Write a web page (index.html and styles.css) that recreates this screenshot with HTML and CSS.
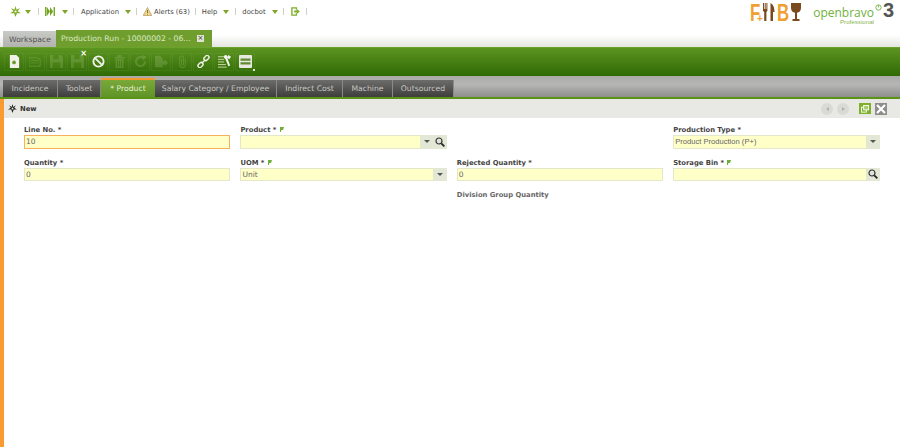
FILE: index.html
```html
<!DOCTYPE html>
<html lang="en">
<head>
<meta charset="utf-8">
<title>Production Run</title>
<link rel="stylesheet" href="styles.css">
</head>
<body>
<header class="topbar">
  <nav class="nav">
    <svg class="ic-star" viewBox="0 0 12 12"><path d="M6 0 7.200 4 11 2.200 8.400 5.600 12 8 7.600 7.800 6 12 4.400 7.800 0 8 3.600 5.600 1 2.200 4.800 4Z" fill="#7fae2a"/><circle cx="6" cy="6" r="1.200" fill="#fff"/></svg>
    <i class="caret c1"></i><i class="sep s1"></i>
    <svg class="ic-ff" viewBox="0 0 11 10"><path d="M0 0h1.500v10H0zM9.500 0H11v10H9.500zM2 0l3.500 5L2 10zM5.500 0 9 5l-3.500 5z" fill="#6fa51f"/></svg>
    <i class="caret c2"></i><i class="sep s2"></i>
    <span class="nv">Application</span><i class="caret c3"></i><i class="sep s3"></i>
    <svg class="ic-warn" viewBox="0 0 9 9"><path d="M4.500.5 8.800 8.500H.2Z" fill="#f0d58a" stroke="#a58a4a" stroke-width=".6"/><path d="M4.200 3h.7v3h-.7zM4.200 6.700h.7v.9h-.7z" fill="#5d4a20"/></svg>
    <span class="nv">Alerts (63)</span><i class="sep s4"></i>
    <span class="nv">Help</span><i class="caret c3"></i><i class="sep s5"></i>
    <span class="nv">docbot</span><i class="caret c3"></i><i class="sep s6"></i>
    <svg class="ic-exit" viewBox="0 0 10 10"><path d="M6 3V1H1v8h5V7" fill="none" stroke="#7fae2a" stroke-width="1.500"/><path d="M3.500 4h3V2.200L9.800 5 6.500 7.800V6h-3z" fill="#7fae2a"/></svg>
    <i class="sep s7"></i>
  </nav>
  <div class="logos">
    <div class="fb">
      <span class="fb-f">F</span><span class="plus">+</span>
      <svg class="cutlery" viewBox="0 0 12 18"><path d="M0 0h1v6h.7V0h1v6h.7V0h1v8L3.400 9v9H1.200V9L0 8zM7.500 0C10 1 11.500 4 11.500 9H10v9H7.500z" fill="#7a4a1e"/></svg>
      <span class="fb-b">B</span>
      <svg class="glass" viewBox="0 0 10 18"><path d="M0 0h10v5c0 3-2 4.500-4 4.800V16h2.500v2h-7v-2H4V9.800C2 9.500 0 8 0 5z" fill="#7a4a1e"/></svg>
    </div>
    <div class="ob">
      <div class="ob-text"><span>openbravo</span><small>Professional</small></div>
      <svg class="ob-power" viewBox="0 0 8 8"><circle cx="4" cy="4" r="3" fill="none" stroke="#6fae3a"/><path d="M4 1.500v2.500" stroke="#6fae3a"/></svg>
      <span class="ob-3">3</span>
    </div>
  </div>
</header>

<div class="wintabs">
  <div class="wt wt-off">Workspace</div>
  <div class="wt wt-on"><span>Production Run - 10000002 - 06...</span><i class="wt-x">×</i></div>
</div>

<div class="toolbar">
  <button class="tb lit"><svg viewBox="0 0 12 14"><path d="M1 0h7l3 3v11H1z" fill="#f1f1ea"/><circle cx="5.500" cy="8" r="2" fill="#6d9b2b"/></svg></button>
  <button class="tb"><svg viewBox="0 0 14 12"><path d="M0 2h9l3 2v7H0z" fill="none" stroke="#c8dca8" stroke-width="1.200"/><path d="M2 5h8M2 7.500h8" stroke="#c8dca8"/></svg></button>
  <button class="tb"><svg viewBox="0 0 12 12"><path d="M0 0h10l2 2v10H0z" fill="#c8dca8"/><path d="M3 0h5v4H3zM2.500 7h7v5h-7z" fill="#5f9420"/></svg></button>
  <button class="tb save-x"><svg viewBox="0 0 12 12"><path d="M0 0h10l2 2v10H0z" fill="#c8dca8"/><path d="M3 0h5v4H3zM2.500 7h7v5h-7z" fill="#5f9420"/></svg><em>×</em></button>
  <button class="tb lit"><svg viewBox="0 0 14 14"><circle cx="7" cy="7" r="5.500" fill="none" stroke="#f1f1ea" stroke-width="2"/><path d="M3 3l8 8" stroke="#f1f1ea" stroke-width="2"/></svg></button>
  <button class="tb"><svg viewBox="0 0 12 13"><path d="M1 2h10v1.500H1zM4 0h4v2H4zM2 4h8v9H2z" fill="#c8dca8"/><path d="M4 5.500v6M6 5.500v6M8 5.500v6" stroke="#5f9420"/></svg></button>
  <button class="tb"><svg viewBox="0 0 13 13"><path d="M11 6.500A4.500 4.500 0 1 1 9 2.800" fill="none" stroke="#c8dca8" stroke-width="2"/><path d="M7.500 0 12.500 1.500 9.500 5.500z" fill="#c8dca8"/></svg></button>
  <button class="tb"><svg viewBox="0 0 15 13"><path d="M0 0h6l3 3v3h2V4l4 4-4 4v-2H9v3H0z" fill="#c8dca8"/></svg></button>
  <button class="tb"><svg viewBox="0 0 9 14"><path d="M7.500 4v6.500a3 3 0 0 1-6 0V3a2 2 0 0 1 4 0v7a1 1 0 0 1-2 0V4" fill="none" stroke="#c8dca8" stroke-width="1.100"/></svg></button>
  <button class="tb lit"><svg viewBox="0 0 14 14"><g fill="none" stroke="#f1f1ea" stroke-width="1.500"><rect x="7.200" y="1.200" width="6" height="4" rx="1.800" transform="rotate(-45 10.200 3.200)"/><rect x=".8" y="8.800" width="6" height="4" rx="1.800" transform="rotate(-45 3.800 10.800)"/><path d="M5 9l4-4"/></g></svg></button>
  <button class="tb lit"><svg viewBox="0 0 15 15"><path d="M0 2h8M0 5h7M0 8h7M0 11h9M0 14h10" stroke="#c8d8a8" stroke-width="1.100"/><path d="M8 0c2-.3 3 1 2.500 3L14 12l-2 1-3.500-8.500C7 4 6 2 8 0z" fill="#f4f4ee"/><path d="M12 0l3 2-2 3-3-2z" fill="#f4f4ee"/></svg></button>
  <button class="tb lit last"><svg viewBox="0 0 13 13"><rect width="13" height="13" rx="1" fill="#e8e8e0"/><path d="M1.500 3.500h10v2.200h-10zM1.500 7.300h10v2.200h-10z" fill="#5f8a30"/></svg><u></u></button>
</div>

<div class="subtabs">
  <div class="st w1">Incidence</div>
  <div class="st w2">Toolset</div>
  <div class="st st-on w3">* Product</div>
  <div class="st w4">Salary Category / Employee</div>
  <div class="st w5">Indirect Cost</div>
  <div class="st w6">Machine</div>
  <div class="st w7">Outsourced</div>
</div>

<main class="content">
  <div class="status">
    <svg class="ic-new" viewBox="0 0 10 10"><path d="M5 0 5.900 3.200 8.800 1.400 7 4.300 10 6 6.400 6.100 5 10 3.600 6.100 0 6 3 4.300 1.200 1.400 4.100 3.200Z" fill="#222"/><circle cx="5" cy="5" r="1" fill="#e8e9e5"/></svg>
    <b>New</b>
    <div class="status-actions">
      <i class="nav-btn"><s class="tri-l"></s></i>
      <i class="nav-btn"><s class="tri-r"></s></i>
      <i class="btn-green"><svg viewBox="0 0 9 9"><rect x=".5" y="2.500" width="5.500" height="5.500" fill="none" stroke="#fff"/><rect x="3" y=".5" width="5.500" height="5" fill="#a9cc6a" stroke="#fff"/></svg></i>
      <i class="btn-close"><svg viewBox="0 0 12 12"><path d="M2 2l8 8M10 2l-8 8" stroke="#fff" stroke-width="2.200"/></svg></i>
    </div>
  </div>
  <form class="form">
    <div class="field"><label>Line No. *</label><div class="inp focus">10</div></div>
    <div class="field"><label>Product * <svg class="ext" viewBox="0 0 4 5"><path d="M0 0h4L3 3H1.300L1 5H0z" fill="#6fae3a"/></svg></label>
      <div class="combo"><div class="inp"></div><span class="drop"><s></s></span><span class="search"><svg viewBox="0 0 10 10"><circle cx="4" cy="4" r="3" fill="#dfe3da" stroke="#333" stroke-width="1.200"/><path d="M6.300 6.300 9.300 9.300" stroke="#222" stroke-width="1.800"/></svg></span></div></div>
    <div class="field"></div>
    <div class="field"><label>Production Type *</label>
      <div class="combo"><div class="inp arial">Product Production (P+)</div><span class="drop"><s></s></span></div></div>

    <div class="field"><label>Quantity *</label><div class="inp">0</div></div>
    <div class="field"><label>UOM * <svg class="ext" viewBox="0 0 4 5"><path d="M0 0h4L3 3H1.300L1 5H0z" fill="#6fae3a"/></svg></label>
      <div class="combo"><div class="inp">Unit</div><span class="drop"><s></s></span></div></div>
    <div class="field"><label>Rejected Quantity *</label><div class="inp">0</div></div>
    <div class="field"><label>Storage Bin * <svg class="ext" viewBox="0 0 4 5"><path d="M0 0h4L3 3H1.300L1 5H0z" fill="#6fae3a"/></svg></label>
      <div class="combo"><div class="inp"></div><span class="search"><svg viewBox="0 0 10 10"><circle cx="4" cy="4" r="3" fill="#dfe3da" stroke="#333" stroke-width="1.200"/><path d="M6.300 6.300 9.300 9.300" stroke="#222" stroke-width="1.800"/></svg></span></div></div>

    <div class="field"></div>
    <div class="field"></div>
    <div class="field"><label class="muted">Division Group Quantity</label></div>
  </form>
</main>
</body>
</html>
```
FILE: styles.css
```css
* { box-sizing: border-box; }
html, body { margin: 0; height: 447px; overflow: hidden; background: #fff; }
body { font: 7.700px "DejaVu Sans", sans-serif; color: #444; display: flex; flex-direction: column; }
i, em, s, u { font-style: normal; text-decoration: none; }

.topbar { height: 30px; display: flex; justify-content: space-between; }
.nav { display: flex; align-items: center; height: 23px; padding-left: 10px; }
.nav svg { flex: none; }
.ic-star { width: 11px; height: 11px; margin-right: 4px; }
.ic-ff { width: 10px; height: 9px; margin-right: 7px; }
.ic-warn { width: 9px; height: 9px; margin-right: 2px; }
.ic-exit { width: 9px; height: 9px; }
.caret { flex: none; width: 0; height: 0; border: 3px solid transparent; border-top: 4px solid #7fa52a; border-bottom: 0; }
.sep { flex: none; width: 1px; height: 7px; background: #cfcfc8; }
.c3 { margin-left: 6px; }
.s1 { margin: 0 6px 0 7px; }
.s2 { margin: 0 7px 0 5px; }
.s3 { margin: 0 6px 0 5px; }
.s4 { margin: 0 6px 0 5px; }
.s5 { margin: 0 6px 0 6px; }
.s6 { margin: 0 7px 0 5px; }
.s7 { margin: 0 0 0 6px; }
.nv { color: #444; font-size: 6.800px; white-space: nowrap; }

.logos { display: flex; padding-right: 6px; }
.fb { display: flex; width: 50px; height: 24px; align-items: flex-start; padding-top: 3px; margin-right: 11px; color: #f0a030; font: 700 24px/19px "Liberation Sans", sans-serif; }
.fb-f { display: block; width: 7px; transform: scaleX(.7); transform-origin: left; }
.fb-b { display: block; width: 14px; margin-left: 2px; transform: scaleX(.7); transform-origin: left; }
.plus { display: block; width: 7px; font-size: 10px; line-height: 9px; margin-top: 11px; text-align: center; }
.cutlery { width: 12px; height: 18px; flex: none; }
.glass { width: 10px; height: 18px; flex: none; }
.ob { display: flex; align-items: flex-start; padding-top: 6px; }
.ob-text { display: flex; flex-direction: column; align-items: flex-end; width: 63px; color: #6fb23c; font: 400 12px/13px "Open Sans", sans-serif; white-space: nowrap; }
.ob-text small { font: 6.200px/5px "Liberation Sans", sans-serif; color: #8ab552; }
.ob-power { width: 7px; height: 7px; margin: -2px 1px 0 1px; flex: none; }
.ob-3 { font: 700 20px/16px "Liberation Sans", sans-serif; color: #555; margin-top: -4px; width: 11px; }

.wintabs { height: 17px; display: flex; align-items: flex-end; padding-left: 3px; background: linear-gradient(#fff 30%, #e4e4e0); }
.wt { height: 17px; display: flex; align-items: center; font-size: 7.700px; white-space: nowrap; }
.wt-off { width: 53px; height: 16px; padding-left: 6px; background: linear-gradient(#c9cbc6, #b2b3ae); color: #555; }
.wt-on { width: 156px; padding: 0 8px 0 5px; background: #6f9e2e; color: #dbe7c4; justify-content: space-between; }
.wt-x { width: 7px; height: 7px; background: #dfe3d4; color: #333; font-size: 7px; line-height: 7px; text-align: center; }

.toolbar { height: 29px; border-top: 1px solid #6aa32a; background: linear-gradient(#5c9420, #2f6a05); display: flex; align-items: center; padding: 0 0 1px 4px; gap: 1px; }
.tb { width: 20px; height: 18px; padding: 0; border: 1px solid rgba(255,255,255,.05); background: none; display: flex; align-items: center; justify-content: center; position: relative; }
.tb svg { height: 13px; width: 13px; opacity: .2; }
.tb.lit svg { opacity: 1; }
.save-x em { position: absolute; top: -4px; right: -1px; color: #fff; font: 700 8px/8px "DejaVu Sans", sans-serif; }
.last u { position: absolute; right: -1px; bottom: -1px; width: 2px; height: 2px; background: #e0e8d0; }

.subtabs { height: 23px; background: linear-gradient(#aaaaa8, #b6b6b4 40%, #8e8e8c); display: flex; align-items: flex-end; padding-left: 3px; border-bottom: 2px solid #5a9416; }
.st { height: 17px; display: flex; align-items: center; justify-content: center; background: linear-gradient(#6c6c6a, #3e3e3c); color: #c9c9c4; border-right: 1px solid #8a8a88; font-size: 7.700px; white-space: nowrap; }
.w1 { width: 55px; } .w2 { width: 43px; } .w3 { width: 54px; } .w4 { width: 122px; } .w5 { width: 66px; } .w6 { width: 50px; } .w7 { width: 61px; }
.st-on { height: 19px; background: linear-gradient(#7aa83a, #5f9426); color: #e8f0d4; border-top: 2px solid #f39a2e; border-right: 0; }

.content { flex: 1; border-left: 4px solid #f89c32; }
.status { height: 19px; background: #e8e9e5; display: flex; align-items: center; padding-left: 4px; color: #333; font-size: 6.800px; }
.ic-new { width: 9px; height: 9px; margin-right: 3px; }
.status-actions { margin-left: auto; display: flex; align-items: center; padding-right: 13px; }
.nav-btn { width: 12px; height: 12px; border-radius: 50%; background: #d9dad6; margin-right: 4px; display: flex; align-items: center; justify-content: center; }
.tri-l { border: 2px solid transparent; border-right: 3px solid #b0b1ad; border-left: 0; }
.tri-r { border: 2px solid transparent; border-left: 3px solid #b0b1ad; border-right: 0; }
.btn-green { width: 12px; height: 11px; background: #7fb02c; margin-left: 6px; display: flex; align-items: center; justify-content: center; }
.btn-green svg { width: 8px; height: 8px; }
.btn-close { width: 12px; height: 12px; background: #8d8e8b; margin-left: 4px; display: flex; }
.btn-close svg { width: 12px; height: 12px; }

.form { display: grid; grid-template-columns: repeat(4, 206.400px); column-gap: 10px; grid-auto-rows: 32.500px; padding: 7px 0 0 20px; }
.field { display: flex; flex-direction: column; min-width: 0; }
label { display: block; height: 10px; font: 700 6.800px/10px "DejaVu Sans", sans-serif; color: #444; }
.muted { color: #666; }
.ext { width: 4px; height: 5px; margin-left: 1px; }
.inp { height: 13.500px; width: 100%; background: #ffffc8; border: 1px solid #e3e8c8; padding-left: 1px; font: 7.500px/11px "DejaVu Sans", sans-serif; color: #666; }
.inp.focus { border-color: #f5b15d; }
.inp.arial { font: 7.600px/11px "Liberation Sans", sans-serif; }
.combo { display: flex; }
.combo .inp { flex: 1; min-width: 0; }
.drop, .search { flex: none; width: 13px; height: 13.500px; background: #e3e8d6; display: flex; align-items: center; justify-content: center; }
.drop s { border: 3px solid transparent; border-top: 3px solid #555; border-bottom: 0; }
.search svg { width: 10px; height: 10px; }
```
